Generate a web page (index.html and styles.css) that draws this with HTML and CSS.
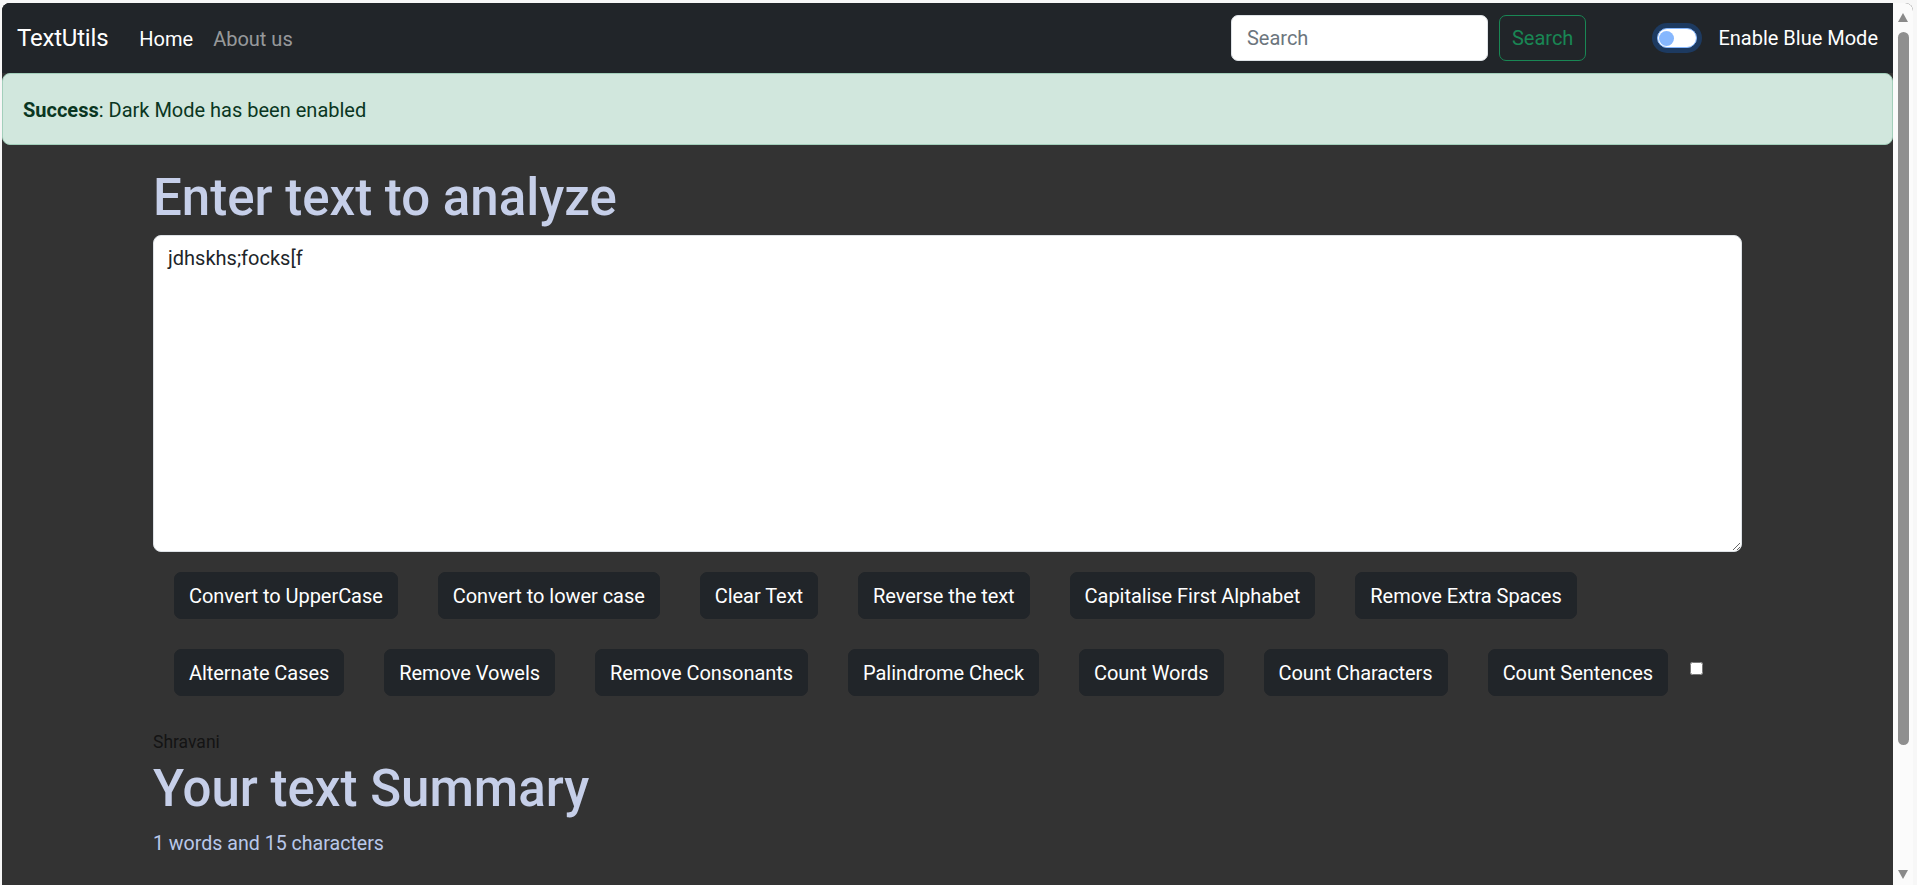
FILE: index.html
```html
<!DOCTYPE html>
<html lang="en">
<head>
<meta charset="utf-8">
<title>TextUtils</title>
<link rel="stylesheet" href="styles.css">
</head>
<body>
<div class="window">
  <div class="viewport">
    <nav class="navbar">
      <a class="brand" href="#">TextUtils</a>
      <ul class="nav">
        <li><a class="nav-link active" href="#">Home</a></li>
        <li><a class="nav-link" href="#">About us</a></li>
      </ul>
      <form class="search">
        <input class="search-input" type="search" placeholder="Search">
        <button class="btn-outline" type="button">Search</button>
      </form>
      <div class="switch-wrap">
        <span class="switch"><span class="knob"></span></span>
        <span class="switch-label">Enable Blue Mode</span>
      </div>
    </nav>
    <div class="alert"><strong>Success</strong>: Dark Mode has been enabled</div>
    <main class="container">
      <h1 class="title">Enter text to analyze</h1>
      <textarea class="box" rows="10">jdhskhs;focks[f</textarea>
      <div class="btn-row first">
        <button class="btn">Convert to UpperCase</button>
        <button class="btn">Convert to lower case</button>
        <button class="btn">Clear Text</button>
        <button class="btn">Reverse the text</button>
        <button class="btn">Capitalise First Alphabet</button>
        <button class="btn">Remove Extra Spaces</button>
      </div>
      <div class="btn-row">
        <button class="btn">Alternate Cases</button>
        <button class="btn">Remove Vowels</button>
        <button class="btn">Remove Consonants</button>
        <button class="btn">Palindrome Check</button>
        <button class="btn">Count Words</button>
        <button class="btn">Count Characters</button>
        <button class="btn">Count Sentences</button>
        <input class="check" type="checkbox">
      </div>
      <div class="author">Shravani</div>
      <h1 class="title summary">Your text Summary</h1>
      <p class="stat count">1 words and 15 characters</p>
      <p class="stat">0.008 Minutes read</p>
    </main>
  </div>
  <div class="scrollbar">
    <span class="arrow up"></span>
    <span class="thumb"></span>
    <span class="arrow down"></span>
  </div>
</div>
</body>
</html>
```

FILE: styles.css
```css
* { box-sizing: border-box; }
html, body { margin: 0; height: 100%; }
body {
  background: #f7f7f7;
  font-family: Roboto, "Segoe UI", "Liberation Sans", sans-serif;
  overflow: hidden;
}
.window {
  display: flex;
  height: 882px;
  margin: 3px 4px 0 2px;
  border-radius: 8px 8px 0 0;
  overflow: hidden;
  background: #333333;
}
.viewport {
  flex: 1;
  display: flex;
  flex-direction: column;
  overflow: hidden;
  background: #333333;
}

/* navbar */
.navbar {
  flex: none;
  height: 70px;
  background: #212529;
  display: flex;
  align-items: center;
  padding: 0 15px;
}
.brand {
  font-size: 24px;
  color: #fff;
  text-decoration: none;
  margin-right: 21px;
  line-height: 30px;
  letter-spacing: -0.2px;
}
.nav { list-style: none; margin: 0; padding: 0; display: flex; }
.nav-link {
  display: block;
  padding: 11px 10px 9px;
  font-size: 20px;
  line-height: 30px;
  color: rgba(255,255,255,.55);
  text-decoration: none;
}
.nav-link.active { color: #fff; }
.search { margin-left: auto; display: flex; gap: 11px; }
.search-input {
  width: 257px;
  height: 46px;
  border: 1px solid #dee2e6;
  border-radius: 7px;
  padding: 7px 15px;
  font: 20px Roboto, sans-serif;
  color: #212529;
  background: #fff;
  outline: none;
}
.search-input::placeholder { color: #6c757d; }
.btn-outline {
  height: 46px;
  padding: 7px 12px;
  border: 1px solid #198754;
  border-radius: 7px;
  background: transparent;
  color: #198754;
  font: 20px Roboto, sans-serif;
}
.switch-wrap {
  margin-left: 71px;
  display: flex;
  align-items: center;
  gap: 21px;
}
.switch {
  width: 40px;
  height: 20px;
  border-radius: 10px;
  background: #fff;
  border: 1px solid #86b7fe;
  box-shadow: 0 0 0 5px #1d3a60;
  display: flex;
  align-items: center;
  padding: 0 1px;
}
.knob {
  width: 15px;
  height: 15px;
  border-radius: 50%;
  background: #86b7fe;
}
.switch-label { color: #fff; font-size: 20px; line-height: 30px; }

/* alert */
.alert {
  flex: none;
  background: #d1e7dd;
  border: 1px solid #a3cfbb;
  border-radius: 8px;
  padding: 21px 20px 19px;
  font-size: 20px;
  line-height: 30px;
  color: #0a3622;
}
.alert strong { font-weight: 700; }

/* main */
.container {
  width: 1589px;
  margin: 0 auto;
  padding-top: 23px;
}
.title {
  margin: 0 0 7px;
  font-size: 51px;
  font-weight: 500;
  line-height: 60px;
  color: #c6cfe9;
}
.box {
  display: block;
  width: 100%;
  height: 317px;
  padding: 7px 14px;
  border: 1px solid #dee2e6;
  border-radius: 8px;
  background: #fff;
  color: #212529;
  font: 20px/30px Roboto, sans-serif;
  resize: vertical;
  outline: none;
}
.btn-row {
  display: flex;
  gap: 40px;
  padding-left: 21px;
  margin-top: 30px;
}
.btn-row.first { margin-top: 20px; }
.btn {
  height: 47px;
  padding: 7px 14px;
  border: 1px solid #212529;
  border-radius: 7px;
  background: #212529;
  color: #fff;
  font: 20px/30px Roboto, sans-serif;
  letter-spacing: -0.05px;
  white-space: nowrap;
}
.check {
  width: 13px;
  height: 13px;
  margin: 13px 0 0 -18px;
  align-self: flex-start;
}
.author {
  margin-top: 33px;
  font-size: 17.5px;
  line-height: 26px;
  color: #141414;
}
.summary { margin: 4px 0 10px; }
.stat {
  margin: 0 0 20px;
  font-size: 20px;
  line-height: 30px;
  color: #b9c8ea;
}
.stat.count { font-size: 19.6px; margin-bottom: 23px; }

/* scrollbar */
.scrollbar {
  flex: none;
  width: 20px;
  background: #fbfbfb;
  display: flex;
  flex-direction: column;
  align-items: center;
  padding: 10px 0 6px;
}
.arrow {
  width: 0;
  height: 0;
  border-left: 5px solid transparent;
  border-right: 5px solid transparent;
}
.arrow.up { border-bottom: 9px solid #8a8a8a; }
.arrow.down { border-top: 9px solid #8a8a8a; margin-top: auto; }
.thumb {
  width: 11px;
  height: 713px;
  margin-top: 10px;
  border-radius: 6px;
  background: #8f8f8f;
}
```
